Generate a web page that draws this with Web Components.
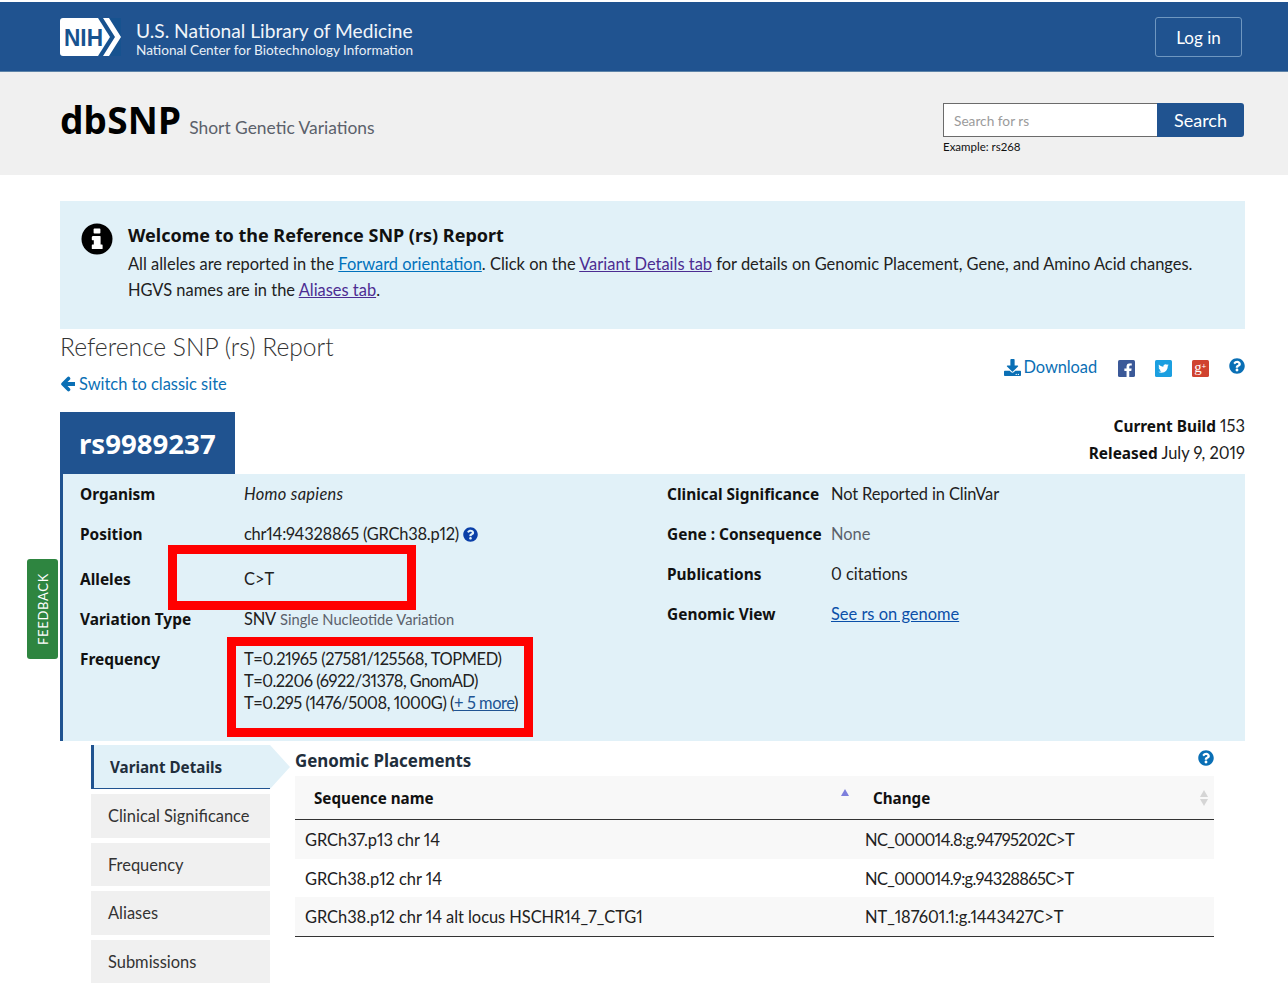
<!DOCTYPE html>
<html lang="en">
<head>
<meta charset="utf-8">
<title>dbSNP rs9989237</title>
<style>
  html, body { margin: 0; height: 985px; overflow: hidden; background: #fff; }
  body { font-family: "Lato", "Noto Sans", sans-serif; font-size: 16.44px; color: #212121; font-variant-numeric: proportional-nums; }
  a { color: #205493; }
  .hint { color: #5b616b; font-size: 14.7px; letter-spacing: 0; }
  .pos { letter-spacing: -.24px; }
  .freq { letter-spacing: -.37px; }
  .freq2 { letter-spacing: -.5px; }
  .freq3 { letter-spacing: -.45px; }
</style>
</head>
<body>
<nih-banner></nih-banner>
<db-header></db-header>
<page-wrap>
  <welcome-box>
    All alleles are reported in the <a href="#" style="color:#0071bc">Forward orientation</a>. Click on the <a href="#" style="color:#4c2c92">Variant Details tab</a> for details on Genomic Placement, Gene, and Amino Acid changes.<br>
    HGVS names are in the <a href="#" style="color:#4c2c92">Aliases tab</a>.
  </welcome-box>
  <report-head></report-head>
  <rs-summary>
    <summary-row slot="left" label="Organism" h="40"><i style="letter-spacing:.3px">Homo sapiens</i></summary-row>
    <summary-row slot="left" label="Position" h="40"><span class="pos">chr14:94328865 (GRCh38.p12)</span> <help-icon size="15" color="#0a3fa8"></help-icon></summary-row>
    <summary-row slot="left" label="Alleles" h="50">C&gt;T</summary-row>
    <summary-row slot="left" label="Variation Type" h="30"><span class="pos">SNV</span> <span class="hint">Single Nucleotide Variation</span></summary-row>
    <summary-row slot="left" label="Frequency" h="92" top="14"><span class="freq">T=0.21965 (27581/125568, TOPMED)</span><br><span class="freq2">T=0.2206 (6922/31378, GnomAD)</span><br><span class="freq3">T=0.295 (1476/5008, 1000G) (<a href="#">+ 5 more</a>)</span></summary-row>
    <summary-row slot="right" label="Clinical Significance" h="40"><span style="letter-spacing:-.12px">Not Reported in ClinVar</span></summary-row>
    <summary-row slot="right" label="Gene : Consequence" h="40"><span style="color:#5b616b">None</span></summary-row>
    <summary-row slot="right" label="Publications" h="40">0 citations</summary-row>
    <summary-row slot="right" label="Genomic View" h="40"><a href="#" style="color:#0a4fa8">See rs on genome</a></summary-row>
  </rs-summary>
  <detail-area>
    <side-tabs slot="tabs"></side-tabs>
    <placements-table slot="main"></placements-table>
  </detail-area>
</page-wrap>
<feedback-tab></feedback-tab>

<script>
const BOLD = `"Noto Sans", sans-serif`;
const NAVY = "#205390";
const ICONS = {
  help: `<svg viewBox="0 0 512 512"><path fill="currentColor" d="M504 256c0 136.997-111.043 248-248 248S8 392.997 8 256C8 119.083 119.043 8 256 8s248 111.083 248 248zM262.655 90c-54.497 0-89.255 22.957-116.549 63.758-3.536 5.286-2.353 12.415 2.715 16.258l34.699 26.31c5.205 3.947 12.621 3.008 16.665-2.122 17.864-22.658 30.113-35.797 57.303-35.797 20.429 0 45.698 13.148 45.698 32.958 0 14.976-12.363 22.667-32.534 33.976C247.128 238.528 216 254.941 216 296v4c0 6.627 5.373 12 12 12h56c6.627 0 12-5.373 12-12v-1.333c0-28.462 83.186-29.647 83.186-106.667 0-58.002-60.165-102-116.531-102zM256 338c-25.365 0-46 20.635-46 46 0 25.364 20.635 46 46 46s46-20.636 46-46c0-25.365-20.635-46-46-46z"/></svg>`,
  info: `<svg viewBox="0 0 32 32" width="32" height="32"><circle cx="16" cy="16" r="15.5" fill="#000"/><rect x="12.6" y="5.6" width="6.8" height="5" rx=".8" fill="#fff"/><path fill="#fff" d="M11.4 13h7.6a.6.6 0 0 1 .6.6v8h1.4a.6.6 0 0 1 .6.6v3.2a.6.6 0 0 1-.6.6H11.4a.6.6 0 0 1-.6-.6v-3.2a.6.6 0 0 1 .6-.6h1.4v-4.4h-1.4a.6.6 0 0 1-.6-.6v-2.4a.6.6 0 0 1 .6-.6z"/></svg>`,
  left: `<svg viewBox="0 0 16 16" width="16" height="16"><path d="M15 8H4" stroke="currentColor" stroke-width="4" fill="none"/><path d="M8.5 2.5L3 8l5.5 5.5" stroke="currentColor" stroke-width="3.6" fill="none" stroke-linecap="round" stroke-linejoin="round"/></svg>`,
  download: `<svg viewBox="0 0 512 512" width="17" height="17"><path fill="currentColor" d="M216 0h80c13.3 0 24 10.7 24 24v168h87.7c17.8 0 26.7 21.5 14.1 34.1L269.7 378.3c-7.5 7.5-19.8 7.5-27.3 0L90.1 226.1c-12.6-12.6-3.7-34.1 14.1-34.1H192V24c0-13.3 10.7-24 24-24zm296 376v112c0 13.3-10.7 24-24 24H24c-13.3 0-24-10.7-24-24V376c0-13.3 10.7-24 24-24h146.7l49 49c20.1 20.1 52.5 20.1 72.6 0l49-49H488c13.3 0 24 10.7 24 24zm-124 88c0-11-9-20-20-20s-20 9-20 20 9 20 20 20 20-9 20-20zm64 0c0-11-9-20-20-20s-20 9-20 20 9 20 20 20 20-9 20-20z"/></svg>`,
  fb: `<svg viewBox="0 0 16 16" width="17" height="17"><rect width="16" height="16" rx="1.5" fill="#3b5998"/><svg x="5.4" y="3" width="9" height="13" viewBox="0 0 320 512" preserveAspectRatio="xMinYMin"><path fill="#fff" d="M279.14 288l14.22-92.66h-88.91v-60.13c0-25.35 12.42-50.06 52.24-50.06h40.42V6.26S260.43 0 225.36 0c-73.22 0-121.08 44.38-121.08 124.72v70.62H22.89V288h81.39v224h100.17V288z"/></svg></svg>`,
  tw: `<svg viewBox="0 0 16 16" width="17" height="17"><rect width="16" height="16" rx="1.5" fill="#1b9fe0"/><svg x="3" y="3" width="10" height="10" viewBox="0 0 512 512"><path fill="#fff" d="M459.37 151.716c.325 4.548.325 9.097.325 13.645 0 138.72-105.583 298.558-298.558 298.558-59.452 0-114.68-17.219-161.137-47.106 8.447.974 16.568 1.299 25.34 1.299 49.055 0 94.213-16.568 130.274-44.832-46.132-.975-84.792-31.188-98.112-72.772 6.498.974 12.995 1.624 19.818 1.624 9.421 0 18.843-1.3 27.614-3.573-48.081-9.747-84.143-51.98-84.143-102.985v-1.299c13.969 7.797 30.214 12.67 47.431 13.319-28.264-18.843-46.781-51.005-46.781-87.391 0-19.492 5.197-37.36 14.294-52.954 51.655 63.675 129.3 105.258 216.365 109.807-1.624-7.797-2.599-15.918-2.599-24.04 0-57.828 46.782-104.934 104.934-104.934 30.213 0 57.502 12.67 76.67 33.137 23.715-4.548 46.456-13.32 66.599-25.34-7.798 24.366-24.366 44.833-46.132 57.827 21.117-2.273 41.584-8.122 60.426-16.243-14.292 20.791-32.161 39.308-52.628 54.253z"/></svg></svg>`,
  gp: `<svg viewBox="0 0 16 16" width="17" height="17"><rect width="16" height="16" rx="1.5" fill="#d0422f"/><text x="2" y="11.5" font-family="Liberation Serif" font-size="14" fill="#fff">g<tspan font-size="8" font-weight="700" dy="-3">+</tspan></text></svg>`
};

class NihBanner extends HTMLElement {
  constructor() {
    super();
    this.attachShadow({ mode: "open" }).innerHTML = /* html */`
    <style>
      :host { display: flex; align-items: center; height: 69px; margin-top: 2px; padding: 0 46px 0 60px; background: ${NAVY}; border-bottom: 1px solid #5d83a8; color: #fff; }
      svg { display: block; margin-right: 15px; }
      .names { flex: 1; padding-top: 5px; }
      .lib { font-size: 19.2px; line-height: 23px; color: #f0f5fa; }
      .ncbi { font-size: 13.6px; line-height: 17px; color: #e8eff6; }
      a { display: block; box-sizing: border-box; width: 87px; height: 40px; line-height: 39px; text-align: center; border: 1px solid #6f97c0; border-radius: 3px; color: #fff; font-size: 17px; text-decoration: none; }
    </style>
    <svg width="61" height="38" viewBox="0 0 61 38">
      <rect width="61" height="38" fill="#17528f"/>
      <path fill="#fff" d="M3 0H38L50 19 38 38H3a3 3 0 0 1-3-3V3a3 3 0 0 1 3-3z"/>
      <path fill="#fff" d="M43 0H49L61 19 49 38H43L55 19z"/>
      <text x="4" y="27.5" font-family="Liberation Sans" font-size="23" font-weight="700" fill="#17528f" textLength="39" lengthAdjust="spacingAndGlyphs">NIH</text>
    </svg>
    <div class="names">
      <div class="lib">U.S. National Library of Medicine</div>
      <div class="ncbi">National Center for Biotechnology Information</div>
    </div>
    <a href="#">Log in</a>`;
  }
}

class DbHeader extends HTMLElement {
  constructor() {
    super();
    this.attachShadow({ mode: "open" }).innerHTML = /* html */`
    <style>
      :host { display: flex; justify-content: space-between; height: 103px; padding: 0 44px 0 60px; background: #f0f0f0; }
      .brand { display: flex; align-items: baseline; padding-top: 23px; height: 60px; }
      h1 { margin: 0 8px 0 0; font: 700 37px/50px ${BOLD}; color: #000; letter-spacing: .2px; }
      .sub { font-size: 17.4px; color: #5b616b; }
      .search { width: 301px; padding-top: 31px; }
      .box { display: flex; height: 34px; }
      .input { box-sizing: border-box; width: 214px; padding: 0 10px; line-height: 34px; background: #fff; border: 1px solid #6b6b6b; border-right: 0; font-size: 13.7px; color: #9b9b9b; }
      .btn { flex: 1; line-height: 34px; text-align: center; background: ${NAVY}; color: #fff; font-size: 18px; border-radius: 0 3px 3px 0; }
      .ex { font-size: 11.5px; line-height: 20px; color: #111; }
    </style>
    <div class="brand"><h1>dbSNP</h1><span class="sub">Short Genetic Variations</span></div>
    <div class="search">
      <div class="box"><div class="input">Search for rs</div><div class="btn">Search</div></div>
      <div class="ex">Example: rs268</div>
    </div>`;
  }
}

class PageWrap extends HTMLElement {
  constructor() {
    super();
    this.attachShadow({ mode: "open" }).innerHTML = /* html */`
    <style>:host { display: block; width: 1185px; margin-left: 60px; padding-top: 26px; }</style>
    <slot></slot>`;
  }
}

class WelcomeBox extends HTMLElement {
  constructor() {
    super();
    this.attachShadow({ mode: "open" }).innerHTML = /* html */`
    <style>
      :host { display: flex; box-sizing: border-box; height: 128px; padding: 21px 20px 0 21px; background: #e1f1f8; }
      .icon { width: 47px; flex: none; padding-top: 1px; }
      h2 { margin: 0; font: 700 18px/26px ${BOLD}; color: #111; }
      .txt { line-height: 26px; margin-top: 3px; }
    </style>
    <div class="icon">${ICONS.info}</div>
    <div>
      <h2>Welcome to the Reference SNP (rs) Report</h2>
      <div class="txt"><slot></slot></div>
    </div>`;
  }
}

class ReportHead extends HTMLElement {
  constructor() {
    super();
    this.attachShadow({ mode: "open" }).innerHTML = /* html */`
    <style>
      :host { display: flex; justify-content: space-between; height: 145px; color: #212121; }
      h2 { margin: 0; font-size: 24.6px; font-weight: 300; line-height: 35px; color: #333; }
      a { color: #0a6fb5; text-decoration: none; }
      .switch { display: flex; align-items: center; gap: 3px; margin-top: 8px; line-height: 24px; }
      .right { display: flex; flex-direction: column; align-items: flex-end; }
      .tools { display: flex; align-items: center; height: 44px; padding-top: 32px; box-sizing: border-box; }
      .dl { display: flex; align-items: center; gap: 3px; margin-right: 21px; letter-spacing: -.1px; }
      .soc { display: block; margin-right: 20px; padding-top: 3px; line-height: 0; }
      help-icon { margin-top: -3px; }
      .build { margin-top: 40px; line-height: 27px; text-align: right; }
      .build b { font: 700 15.4px/27px ${BOLD}; color: #111; }
    </style>
    <div>
      <h2>Reference SNP (rs) Report</h2>
      <a class="switch" href="#">${ICONS.left}Switch to classic site</a>
      <rs-tab></rs-tab>
    </div>
    <div class="right">
      <div class="tools">
        <a class="dl" href="#">${ICONS.download}Download</a>
        <span class="soc">${ICONS.fb}</span><span class="soc">${ICONS.tw}</span><span class="soc">${ICONS.gp}</span>
        <help-icon size="16" color="#0a6fb5"></help-icon>
      </div>
      <div class="build"><b>Current Build</b> 153<br><b>Released</b> July 9, 2019</div>
    </div>`;
  }
}

class RsTab extends HTMLElement {
  constructor() {
    super();
    this.attachShadow({ mode: "open" }).innerHTML = /* html */`
    <style>
      :host { display: block; box-sizing: border-box; width: 175px; height: 62px; margin-top: 16px; padding-left: 19px; background: ${NAVY}; color: #fff; font: 700 27.6px/62px ${BOLD}; }
    </style>
    rs9989237`;
  }
}

class HelpIcon extends HTMLElement {
  connectedCallback() {
    const size = this.getAttribute("size") || 16;
    const root = this.shadowRoot || this.attachShadow({ mode: "open" });
    root.innerHTML = /* html */`
    <style>
      :host { display: inline-block; width: ${size}px; height: ${size}px; vertical-align: -2px; color: ${this.getAttribute("color") || "#0a6fb5"}; }
      svg { display: block; width: 100%; height: 100%; }
    </style>${ICONS.help}`;
  }
}

class RsSummary extends HTMLElement {
  constructor() {
    super();
    this.attachShadow({ mode: "open" }).innerHTML = /* html */`
    <style>
      :host { display: grid; grid-template-columns: 587px 1fr; position: relative; box-sizing: border-box; height: 267px; padding-left: 17px; background: #e1f1f8; border-left: 3px solid ${NAVY}; }
      .col { display: block; }
      .mark { position: absolute; box-sizing: border-box; border: 9px solid #f00; pointer-events: none; }
      .m1 { left: 105px; top: 71px; width: 248px; height: 65px; }
      .m2 { left: 164px; top: 163px; width: 306px; height: 100px; }
    </style>
    <div class="col"><slot name="left"></slot></div>
    <div class="col"><slot name="right"></slot></div>
    <div class="mark m1"></div>
    <div class="mark m2"></div>`;
  }
}

class SummaryRow extends HTMLElement {
  connectedCallback() {
    const root = this.shadowRoot || this.attachShadow({ mode: "open" });
    const h = this.getAttribute("h");
    const top = this.getAttribute("top");
    root.innerHTML = /* html */`
    <style>
      :host { display: flex; box-sizing: border-box; height: ${h}px; ${top ? `padding-top: ${top}px;` : "align-items: center;"} line-height: 22px; }
      .k { width: 164px; flex: none; font: 700 15.45px/22px ${BOLD}; color: #111; }
    </style>
    <div class="k">${this.getAttribute("label")}</div>
    <div><slot></slot></div>`;
  }
}

class DetailArea extends HTMLElement {
  constructor() {
    super();
    this.attachShadow({ mode: "open" }).innerHTML = /* html */`
    <style>:host { display: flex; padding: 4px 31px 0 31px; }</style>
    <slot name="tabs"></slot><slot name="main"></slot>`;
  }
}

class SideTabs extends HTMLElement {
  constructor() {
    super();
    const names = ["Clinical Significance", "Frequency", "Aliases", "Submissions"];
    this.attachShadow({ mode: "open" }).innerHTML = /* html */`
    <style>
      :host { display: flex; flex-direction: column; gap: 5px; width: 204px; flex: none; }
      div { box-sizing: border-box; width: 179px; height: 43.5px; line-height: 45.5px; padding-left: 17px; background: #f0f0f0; color: #333; }
      .on { position: relative; height: 44px; padding-left: 16px; background: #e1f1f8; border-left: 3px solid ${NAVY}; border-bottom: 1px solid ${NAVY}; font: 700 15.2px/44px ${BOLD}; color: #212e3c; }
      .on::after { content: ""; position: absolute; left: 176px; top: 0; border-left: 20px solid #e1f1f8; border-top: 22px solid transparent; border-bottom: 22px solid transparent; }
    </style>
    <div class="on">Variant Details</div>
    ${names.map((n) => `<div>${n}</div>`).join("")}`;
  }
}

class PlacementsTable extends HTMLElement {
  constructor() {
    super();
    const rows = [
      ["GRCh37.p13 chr 14", "NC_000014.8:g.94795202C&gt;T", -.65],
      ["GRCh38.p12 chr 14", "NC_000014.9:g.94328865C&gt;T", -.65],
      ["GRCh38.p12 chr 14 alt locus HSCHR14_7_CTG1", "NT_187601.1:g.1443427C&gt;T", -.05]
    ];
    this.attachShadow({ mode: "open" }).innerHTML = /* html */`
    <style>
      :host { display: block; width: 919px; }
      .top { display: flex; justify-content: space-between; height: 31px; }
      h3 { margin: 0; font: 700 16.9px/31px ${BOLD}; color: #212e3c; }
      help-icon { margin: 5px 0 0 0; }
      .row { display: grid; grid-template-columns: 560px 1fr; height: 38.7px; line-height: 40px; padding-left: 10px; letter-spacing: -.05px; }
      .row:nth-child(odd) { background: #f8f8f8; }
      .head { position: relative; height: 44px; padding-left: 19px; grid-template-columns: 559px 1fr; background: #f0f0f0; border-bottom: 1px solid #333; box-sizing: border-box; font: 700 15.2px/44px ${BOLD}; color: #111; letter-spacing: 0; }
      .rows { border-bottom: 1px solid #333; }
      .tri { position: absolute; width: 0; height: 0; border-left: 4.5px solid transparent; border-right: 4.5px solid transparent; }
      .up1 { left: 546px; top: 13px; border-bottom: 7px solid #7d7fdc; }
      .up2 { left: 905px; top: 14px; border-bottom: 7px solid #d5d5d5; }
      .dn2 { left: 905px; top: 23px; border-top: 7px solid #d5d5d5; }
    </style>
    <div class="top"><h3>Genomic Placements</h3><help-icon size="16" color="#0a6fb5"></help-icon></div>
    <div class="row head"><span>Sequence name</span><span>Change</span>
      <i class="tri up1"></i><i class="tri up2"></i><i class="tri dn2"></i></div>
    <div class="rows">
      ${rows.map((r) => `<div class="row"><span>${r[0]}</span><span style="letter-spacing:${r[2]}px">${r[1]}</span></div>`).join("")}
    </div>`;
  }
}

class FeedbackTab extends HTMLElement {
  constructor() {
    super();
    this.attachShadow({ mode: "open" }).innerHTML = /* html */`
    <style>
      :host { position: absolute; left: 27px; top: 559px; width: 31px; height: 100px; background: #2e8540; border-radius: 3px; display: flex; align-items: center; justify-content: center; }
      span { writing-mode: vertical-rl; transform: rotate(180deg); color: #fff; font-size: 13px; letter-spacing: .7px; }
    </style>
    <span>FEEDBACK</span>`;
  }
}

customElements.define("nih-banner", NihBanner);
customElements.define("db-header", DbHeader);
customElements.define("page-wrap", PageWrap);
customElements.define("welcome-box", WelcomeBox);
customElements.define("help-icon", HelpIcon);
customElements.define("rs-tab", RsTab);
customElements.define("report-head", ReportHead);
customElements.define("rs-summary", RsSummary);
customElements.define("summary-row", SummaryRow);
customElements.define("detail-area", DetailArea);
customElements.define("side-tabs", SideTabs);
customElements.define("placements-table", PlacementsTable);
customElements.define("feedback-tab", FeedbackTab);
</script>
</body>
</html>
